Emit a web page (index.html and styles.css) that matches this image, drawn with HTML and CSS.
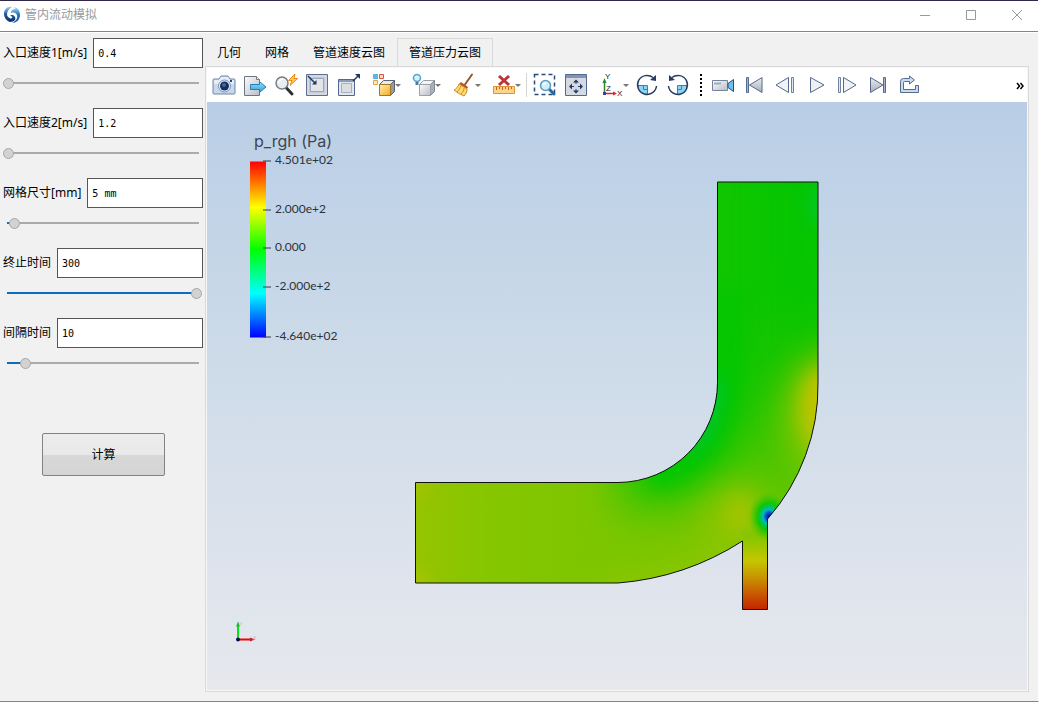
FILE: index.html
```html
<!DOCTYPE html>
<html lang="zh-CN">
<head>
<meta charset="utf-8">
<meta name="viewport" content="width=device-width, initial-scale=1">
<title>管内流动模拟</title>
<link rel="stylesheet" href="styles.css">
</head>
<body>
<svg class="shared-defs" aria-hidden="true">
  <defs>
    <linearGradient id="steel" x1="0" y1="0" x2="1" y2="1"><stop offset="0" stop-color="#fbfcfd"/><stop offset="1" stop-color="#b9bec6"/></linearGradient>
    <linearGradient id="steelDark" x1="0" y1="0" x2="0" y2="1"><stop offset="0" stop-color="#eceef1"/><stop offset="1" stop-color="#a9aeb5"/></linearGradient>
    <linearGradient id="sky" x1="0" y1="0" x2="0" y2="1"><stop offset="0" stop-color="#9fe0fa"/><stop offset="1" stop-color="#2f9bd8"/></linearGradient>
    <linearGradient id="gold" x1="0" y1="0" x2="1" y2="1"><stop offset="0" stop-color="#fff0b8"/><stop offset="1" stop-color="#f5a81c"/></linearGradient>
    <linearGradient id="logoLeft" x1="0" y1="0" x2="0" y2="1"><stop offset="0" stop-color="#9ccfe6"/><stop offset="0.500" stop-color="#1a5a9c"/><stop offset="1" stop-color="#062f66"/></linearGradient>
    <linearGradient id="logoRight" x1="0" y1="0" x2="0" y2="1"><stop offset="0" stop-color="#b5dff0"/><stop offset="0.500" stop-color="#1571bd"/><stop offset="1" stop-color="#0d57a6"/></linearGradient>
  </defs>
</svg>
<div class="window">
  <header class="titlebar">
    <svg class="logo" viewBox="0 0 18 18" aria-hidden="true">
      <path d="M9 1C4 0 1 4 1 8c0 4 3 7 6 8 2 0 4-1 5-2 1-2 0-4-2-5H7c1 1 3 2 2 3s-4 0-5-3c0-4 2-6 5-8z" fill="url(#logoLeft)"/>
      <path d="M10 1c5 0 7 4 7 8 0 5-4 8-8 8 4-2 6-5 5-8-1-2-3-3-6-2 0-3 2-4 5-4-1-1-2-1-3-2z" fill="url(#logoRight)"/>
    </svg>
    <h1 class="title">管内流动模拟</h1>
    <div class="window-buttons">
      <button class="window-button" aria-label="最小化"><svg viewBox="0 0 12 12"><path d="M1 6.500h10"/></svg></button>
      <button class="window-button" aria-label="最大化"><svg viewBox="0 0 12 12"><path d="M1.500 1.500h9v9h-9z"/></svg></button>
      <button class="window-button" aria-label="关闭"><svg viewBox="0 0 12 12"><path d="M1 1l10 10M11 1L1 11"/></svg></button>
    </div>
  </header>
  <main class="workspace">
    <form class="sidebar">
      <div class="parameter">
        <div class="field"><label for="v1">入口速度1[m/s]</label><input id="v1" class="value" type="text" value="0.4"></div>
        <input class="slider" type="range" aria-label="入口速度1" min="0" max="100" value="0" style="--fill:0%">
      </div>
      <div class="parameter">
        <div class="field"><label for="v2">入口速度2[m/s]</label><input id="v2" class="value" type="text" value="1.2"></div>
        <input class="slider" type="range" aria-label="入口速度2" min="0" max="100" value="0" style="--fill:0%">
      </div>
      <div class="parameter">
        <div class="field"><label for="mesh">网格尺寸[mm]</label><input id="mesh" class="value" type="text" value="5 mm"></div>
        <input class="slider" type="range" aria-label="网格尺寸" min="0" max="100" value="3" style="--fill:3%">
      </div>
      <div class="parameter">
        <div class="field"><label for="end">终止时间</label><input id="end" class="value" type="text" value="300"></div>
        <input class="slider" type="range" aria-label="终止时间" min="0" max="100" value="100" style="--fill:96%">
      </div>
      <div class="parameter">
        <div class="field"><label for="step">间隔时间</label><input id="step" class="value" type="text" value="10"></div>
        <input class="slider" type="range" aria-label="间隔时间" min="0" max="100" value="9" style="--fill:9%">
      </div>
      <button class="compute" type="button">计算</button>
    </form>
    <section class="content">
      <nav class="tabs" role="tablist">
        <button class="tab" role="tab" aria-selected="false">几何</button>
        <button class="tab" role="tab" aria-selected="false">网格</button>
        <button class="tab" role="tab" aria-selected="false">管道速度云图</button>
        <button class="tab tab-active" role="tab" aria-selected="true">管道压力云图</button>
      </nav>
      <div class="pane">
        <div class="toolbar" role="toolbar">
          <button class="tool" aria-label="截图"><svg viewBox="0 0 24 24"><path d="M2 6h5l2-3h7l2 3h4q1 0 1 1v13q0 1-1 1H2q-1 0-1-1V7q0-1 1-1z" fill="#c9d7ea" stroke="#6f87ab"/><path d="M2 7h5l2-3h7l2 3h4v4H2z" fill="#e6eef8"/><circle cx="12.500" cy="13" r="6" fill="#e9f1fa" stroke="#8094b3"/><circle cx="12.500" cy="13" r="4.500" fill="#15305f"/><circle cx="12" cy="12" r="2" fill="#3f68a3"/><path d="M18 7h2v2h-2z" fill="#26477d"/></svg></button>
          <button class="tool" aria-label="导出"><svg viewBox="0 0 24 24"><path d="M1.500 3.500h12l3 3v16h-15z" fill="url(#steel)" stroke="#6d7684"/><path d="M13.500 3.500v3h3" fill="#fff" stroke="#6d7684"/><path d="M7.500 11.500h9V8.500l6.500 5.500-6.500 5.500v-3h-9z" fill="url(#sky)" stroke="#237eb9"/></svg></button>
          <button class="tool" aria-label="快速缩放"><svg viewBox="0 0 24 24"><path d="M12 14.500l6 6.500" stroke="#2e3034" stroke-width="3" stroke-linecap="round"/><circle cx="8" cy="10" r="6" fill="#e8edf1" stroke="#777d84" stroke-width="1.500"/><path d="M4.500 10a4 4 0 0 1 5-3.500" fill="none" stroke="#fff" stroke-width="1.500"/><path d="M21 1l-6.500 6.500h3.500l-2 5 7.500-7h-3.500z" fill="#ffcd52" stroke="#ee8718"/></svg></button>
          <button class="tool" aria-label="适应选择"><svg viewBox="0 0 24 24"><path d="M1.500 1.500h21v21h-21z" fill="#c2c9d5" stroke="#5c6e91"/><path d="M3 3h18v18H3z" fill="none" stroke="#e4e9f0"/><path d="M5.500 5.500h13v13h-13z" fill="#e3e5e9" stroke="#9ba6b8"/><path d="M3 3l7 7" stroke="#203960" stroke-width="1.500"/><path d="M11.500 11.500V7l-4.500 4.500z" fill="#203960"/></svg></button>
          <button class="tool" aria-label="扩展选择"><svg viewBox="0 0 24 24"><path d="M2.500 6.500h16v16h-16z" fill="#e3e6eb" stroke="#53698f"/><path d="M5.500 10.500h10v9h-10z" fill="#dcdee1" stroke="#a6b0c0"/><path d="M3 8h15" stroke="#8b9cba" stroke-width="2"/><path d="M17 8l5-5" stroke="#203960" stroke-width="1.500"/><path d="M24 1h-5l5 5z" fill="#203960"/></svg></button>
          <button class="tool tool-menu" aria-label="实体着色"><svg viewBox="0 0 24 24"><path d="M2 1h5v5H2z" fill="#55b9e7"/><path d="M8.500 1.500h4v4h-4z" fill="#fbd9cf" stroke="#d9593a"/><path d="M2.500 7.500h4v4h-4z" fill="#fff0cc" stroke="#e5a33b"/><path d="M8.500 11.500l4-4h11l-4 4z" fill="#e7e8ea" stroke="#5b6270"/><path d="M19.500 11.500l4-4v11l-4 4z" fill="#959ba5" stroke="#5b6270"/><path d="M8.500 11.500h11v11h-11z" fill="url(#gold)" stroke="#a37628"/></svg></button>
          <button class="tool tool-menu" aria-label="显示"><svg viewBox="0 0 24 24"><circle cx="6" cy="5" r="3.500" fill="#d7f1fd" stroke="#4da5d4" stroke-width="1.500"/><path d="M4.500 9h3v3h-3z" fill="#557895"/><path d="M8.500 11.500l4-4h11l-4 4z" fill="#f3f4f5" stroke="#9aa0a9"/><path d="M19.500 11.500l4-4v11l-4 4z" fill="#a9afb8" stroke="#838993"/><path d="M8.500 11.500h11v11h-11z" fill="url(#steel)" stroke="#9aa0a9"/></svg></button>
          <button class="tool tool-menu" aria-label="清理"><svg viewBox="0 0 24 24"><path d="M21 1.500l-7 10" stroke="#97592a" stroke-width="2" stroke-linecap="round"/><path d="M10 9l7 5-1 2-8-5z" fill="#b9551e"/><path d="M8 11l8 5c0 3-1 5-3 7C9 21 5 19 3 17c2-1 4-3 5-6z" fill="#ffdc72" stroke="#d28a23"/><path d="M10 13c-1 2-2 4-4 6M13 15c0 2-1 4-3 6" fill="none" stroke="#d28a23"/></svg></button>
          <button class="tool tool-menu" aria-label="删除标尺"><svg viewBox="0 0 24 24"><path d="M2.500 13.500h21v7h-21z" fill="#ffd487" stroke="#dd9435"/><path d="M5.500 14v3M8.500 14v2M11.500 14v3M14.500 14v2M17.500 14v3M20.500 14v2" stroke="#b86b1d"/><path d="M8 3l10 9M18 3L8 12" stroke="#bd3338" stroke-width="3"/></svg></button>
          <span class="separator"></span>
          <button class="tool" aria-label="框选缩放"><svg viewBox="0 0 24 24"><path d="M1.500 1.500h20v20h-20z" fill="none" stroke="#2c4a78" stroke-width="1.500" stroke-dasharray="4 3"/><path d="M16 16l5 5" stroke="#25699e" stroke-width="3" stroke-linecap="round"/><circle cx="12.500" cy="12.500" r="5" fill="#d5edf9" stroke="#5b9cc5" stroke-width="1.500"/><path d="M10 12a3 3 0 0 1 3-2" fill="none" stroke="#fff" stroke-width="1.500"/></svg></button>
          <button class="tool" aria-label="全部适应"><svg viewBox="0 0 24 24"><path d="M1.500 1.500h21v21h-21z" fill="#d5dae2" stroke="#53698f"/><path d="M2 2h20v3H2z" fill="#8394b1"/><path d="M12 8v3M12 16v3M7 13.500h3M14 13.500h3" stroke="#2b456f"/><path d="M12 6.500l3 3H9zM12 20.500l3-3H9zM5 13.500l3-3v6zM19 13.500l-3-3v6z" fill="#203960"/></svg></button>
          <button class="tool tool-menu" aria-label="坐标轴"><svg viewBox="0 0 24 24"><path d="M5.500 20V8" stroke="#218b35" stroke-width="1.500"/><path d="M5.500 5l2 5h-4z" fill="#218b35"/><path d="M6 20.500h8" stroke="#ed1c24" stroke-width="1.500"/><path d="M18 20.500l-4-2v4z" fill="#ed1c24"/><path d="M4 19h3v3H4z" fill="#2647b5"/><text class="axis-name" x="6" y="6">Y</text><text class="axis-name" x="7" y="18">Z</text><text class="axis-name" x="18" y="23">X</text></svg></button>
          <button class="tool" aria-label="顺时针旋转"><svg viewBox="0 0 24 24"><path d="M3 12h9v9.500C7 21 3 17 3 12z" fill="#8dd5f6"/><path d="M2 12.500h10.500V22M8.500 12.500v4h4" fill="none" stroke="#2a86bd"/><path d="M18 4.500A9.500 9.500 0 1 0 21.500 13" fill="none" stroke="#263c61" stroke-width="1.500"/><path d="M15 7l6 1V2z" fill="#263c61"/></svg></button>
          <button class="tool" aria-label="逆时针旋转"><svg viewBox="0 0 24 24"><path d="M12 12h9c0 5-4 9-9 9.500z" fill="#8dd5f6"/><path d="M22 12.500H11.500V22M15.500 12.500v4h-4" fill="none" stroke="#2a86bd"/><path d="M6 4.500A9.500 9.500 0 1 1 2.500 13" fill="none" stroke="#263c61" stroke-width="1.500"/><path d="M9 7L3 8V2z" fill="#263c61"/></svg></button>
          <span class="grip"></span>
          <button class="tool" aria-label="录制"><svg viewBox="0 0 24 24"><path d="M1.500 7.500h15v10h-15z" fill="url(#steel)" stroke="#75839c"/><path d="M3 9.500h7v2H3z" fill="#a3abb8"/><path d="M17 10.500l5.500-4v12l-5.500-4z" fill="#6cc1e8" stroke="#1f4f80"/></svg></button>
          <button class="tool" aria-label="第一帧"><svg viewBox="0 0 24 24"><path d="M4.500 4.500h2v15h-2z" fill="#aab4c5" stroke="#53698f"/><path d="M20 4.500v15L7.500 12z" fill="url(#steelDark)" stroke="#53698f"/></svg></button>
          <button class="tool" aria-label="上一帧"><svg viewBox="0 0 24 24"><path d="M15.500 4.500v15L3 12z" fill="#f1f2f4" stroke="#53698f"/><path d="M18.500 4.500h2v15h-2z" fill="#e1e7ef" stroke="#7184a4"/></svg></button>
          <button class="tool" aria-label="播放"><svg viewBox="0 0 24 24"><path d="M6.500 4.500L20 12 6.500 19.500z" fill="#eef0f2" stroke="#53698f"/></svg></button>
          <button class="tool" aria-label="下一帧"><svg viewBox="0 0 24 24"><path d="M3.500 4.500h2v15h-2z" fill="#e1e7ef" stroke="#7184a4"/><path d="M8.500 4.500v15L21 12z" fill="#f1f2f4" stroke="#53698f"/></svg></button>
          <button class="tool" aria-label="最后一帧"><svg viewBox="0 0 24 24"><path d="M4.500 4.500v15L17 12z" fill="url(#steelDark)" stroke="#53698f"/><path d="M17.500 4.500h2v15h-2z" fill="#aab4c5" stroke="#53698f"/></svg></button>
          <button class="tool" aria-label="循环"><svg viewBox="0 0 24 24"><path d="M3.500 19.500v-11q0-3 3-3h6v-2.500l5 4-5 4V8.500h-5q-1 0-1 1v7h12v-4h3v7z" fill="#c9dced" stroke="#53698f"/></svg></button>
          <button class="more" aria-label="更多"><svg viewBox="0 0 8 8"><path d="M1 1l2.500 3L1 7M4.500 1L7 4 4.500 7"/></svg></button>
        </div>
        <div class="viewport">
          <svg class="scene" viewBox="207 102 820 587" role="img" aria-label="管道压力云图">
            <defs>
              <linearGradient id="legendScale" x1="0" y1="0" x2="0" y2="1"><stop offset="0" stop-color="#f00"/><stop offset="0.260" stop-color="#ff0"/><stop offset="0.500" stop-color="#0f0"/><stop offset="0.750" stop-color="#0ff"/><stop offset="1" stop-color="#00f"/></linearGradient>
              <linearGradient id="inletFlow" gradientUnits="userSpaceOnUse" x1="416" y1="0" x2="768" y2="0"><stop offset="0" stop-color="#96c400"/><stop offset="0.200" stop-color="#86c600"/><stop offset="0.550" stop-color="#7cc600"/><stop offset="0.800" stop-color="#78c600"/><stop offset="1" stop-color="#60c600"/></linearGradient>
              <linearGradient id="outletFlow" gradientUnits="userSpaceOnUse" x1="0" y1="182" x2="0" y2="510"><stop offset="0" stop-color="#06c600"/><stop offset="0.350" stop-color="#08c600"/><stop offset="0.550" stop-color="#1cc600"/><stop offset="0.700" stop-color="#3ac600"/><stop offset="0.850" stop-color="#4cc600" stop-opacity="0.800"/><stop offset="1" stop-color="#58c600" stop-opacity="0"/></linearGradient>
              <linearGradient id="branchFlow" gradientUnits="userSpaceOnUse" x1="0" y1="528" x2="0" y2="609"><stop offset="0" stop-color="#78c600" stop-opacity="0"/><stop offset="0.160" stop-color="#92c600"/><stop offset="0.400" stop-color="#c6c600"/><stop offset="0.620" stop-color="#c89000"/><stop offset="0.850" stop-color="#c84c00"/><stop offset="1" stop-color="#c42400"/></linearGradient>
              <radialGradient id="lowPressure"><stop offset="0" stop-color="#0010b8"/><stop offset="0.140" stop-color="#0048c8"/><stop offset="0.280" stop-color="#00b8c0"/><stop offset="0.440" stop-color="#00c640"/><stop offset="0.560" stop-color="#0cc600" stop-opacity="0.900"/><stop offset="1" stop-color="#50c600" stop-opacity="0"/></radialGradient>
              <filter id="spreadWide" filterUnits="userSpaceOnUse" x="300" y="60" width="660" height="660" color-interpolation-filters="sRGB"><feGaussianBlur stdDeviation="22"/></filter>
              <filter id="spread" filterUnits="userSpaceOnUse" x="300" y="60" width="660" height="660" color-interpolation-filters="sRGB"><feGaussianBlur stdDeviation="16"/></filter>
              <filter id="spreadSmall" filterUnits="userSpaceOnUse" x="300" y="60" width="660" height="660" color-interpolation-filters="sRGB"><feGaussianBlur stdDeviation="9"/></filter>
              <clipPath id="pipeShape"><path d="M717.500 181.500H818V382A201 201 0 0 1 767.500 518.500V609H742.500V540.500A270 270 0 0 1 618 582.500H415.500V482H618A100 100 0 0 0 717.500 382Z"/></clipPath>
            </defs>
            <g clip-path="url(#pipeShape)">
              <path d="M415 181h405v430H415z" fill="url(#inletFlow)"/>
              <path d="M670 120h200v390H670z" fill="url(#outletFlow)" filter="url(#spreadSmall)"/>
              <path d="M625 466C690 474 724 430 720 330V90" fill="none" stroke="#10c600" stroke-width="76" filter="url(#spreadWide)"/>
              <path d="M650 474C704 462 732 420 728 330V290" fill="none" stroke="#02c600" stroke-width="26" filter="url(#spreadSmall)"/>
              <path d="M690 450Q718 420 714 376" fill="none" stroke="#00c638" stroke-width="14" filter="url(#spreadSmall)"/>
              <ellipse cx="822" cy="205" rx="12" ry="18" fill="#00c830" filter="url(#spreadSmall)"/>
              <ellipse cx="824" cy="412" rx="34" ry="58" fill="#a0c600" filter="url(#spread)"/>
              <ellipse cx="822" cy="408" rx="18" ry="36" fill="#c0c400" filter="url(#spreadSmall)"/>
              <ellipse cx="736" cy="520" rx="28" ry="34" transform="rotate(20 736 520)" fill="#96c600" filter="url(#spread)"/>
              <ellipse cx="740" cy="514" rx="9" ry="18" fill="#a8c400" filter="url(#spreadSmall)"/>
              <path d="M600 590Q700 578 745 540" fill="none" stroke="#90c600" stroke-width="24" filter="url(#spread)"/>
              <ellipse cx="416" cy="482" rx="12" ry="12" fill="#acc400" filter="url(#spreadSmall)"/>
              <ellipse cx="416" cy="582" rx="12" ry="12" fill="#acc400" filter="url(#spreadSmall)"/>
              <path d="M742 528h27v82h-27z" fill="url(#branchFlow)"/>
              <ellipse cx="769" cy="516" rx="21" ry="25" fill="url(#lowPressure)"/>
            </g>
            <path class="pipe-edge" d="M717.500 181.500H818V382A201 201 0 0 1 767.500 518.500V609H742.500V540.500A270 270 0 0 1 618 582.500H415.500V482H618A100 100 0 0 0 717.500 382Z"/>
            <path d="M250 161h16v176h-16z" fill="url(#legendScale)"/>
            <path class="tick" d="M263 160.500h8M263 209.500h8M263 247.500h8M263 286.500h8M263 336.500h8"/>
            <text class="legend-title" x="254" y="146">p_rgh (Pa)</text>
            <g class="legend-value">
              <text x="275" y="163">4.501e+02</text>
              <text x="275" y="212">2.000e+2</text>
              <text x="275" y="250">0.000</text>
              <text x="275" y="289">-2.000e+2</text>
              <text x="275" y="339">-4.640e+02</text>
            </g>
            <path d="M238 639v-14" stroke="#00e41a" stroke-width="2"/><path d="M238 621l2 5h-4z" fill="#22b536"/>
            <path d="M238 639h14" stroke="#f40000" stroke-width="2"/><path d="M255 639l-5-2v4z" fill="#c22a2a"/>
            <circle cx="238" cy="639" r="2" fill="#0a0a50"/>
            <text class="triad-name" x="239" y="625" fill="#7be08a">Y</text><text class="triad-name" x="253" y="639" fill="#f09a9a">X</text>
          </svg>
        </div>
      </div>
    </section>
  </main>
</div>
</body>
</html>
```
FILE: styles.css
```css
* {
  box-sizing: border-box;
}

body {
  margin: 0;
  font-family: "Noto Sans", "Noto Sans CJK SC", sans-serif;
  font-size: 12px;
  color: #000;
}

button,
input {
  font: inherit;
  color: inherit;
}

button {
  padding: 0;
  border: 0;
  background: none;
}

.shared-defs {
  position: absolute;
  width: 0;
  height: 0;
}

.window {
  display: flex;
  flex-direction: column;
  min-height: 100vh;
  background: #f1f1f1;
  border-right: 1px solid #fff;
  border-bottom: 1px solid #85838f;
}

.titlebar {
  display: flex;
  align-items: center;
  height: 32px;
  padding: 0 0 2px 3px;
  background: #fff;
  border-top: 1px solid #34284a;
  border-bottom: 1px solid #82829a;
}

.logo {
  width: 18px;
  height: 18px;
}

.title {
  margin: 0;
  padding-left: 4px;
  font-size: 12px;
  font-weight: 400;
  line-height: 20px;
  color: #999;
}

.window-buttons {
  display: flex;
  margin: 0 -2px 0 auto;
}

.window-button {
  display: grid;
  place-items: center;
  width: 46px;
  height: 28px;
}

.window-button svg {
  width: 12px;
  height: 12px;
  fill: none;
  stroke: #999;
}

.workspace {
  display: flex;
  flex: 1;
  padding: 5px 9px 9px 0;
  border-top: 1px solid #fff;
}

.sidebar {
  display: flex;
  flex-direction: column;
  flex: 0 0 205px;
  padding: 0 2px 0 3px;
}

.parameter {
  height: 70px;
}

.field {
  display: flex;
  align-items: center;
  gap: 6px;
  height: 30px;
}

.field label {
  padding-bottom: 2px;
}

.value {
  flex: 1;
  min-width: 0;
  height: 30px;
  padding: 0 4px;
  border: 1px solid #555559;
  background: #fff;
  font-family: "DejaVu Sans Mono", monospace;
  font-size: 10px;
}

.slider {
  display: block;
  width: calc(100% - 1px);
  height: 11px;
  margin: 10px 0 0;
  appearance: none;
  background: linear-gradient(#0f6cbd, #0f6cbd) 4px 4px / var(--fill) 2px no-repeat,
    linear-gradient(#ababab, #ababab) 4px 4px / calc(100% - 7px) 2px no-repeat;
}

.slider::-webkit-slider-thumb {
  appearance: none;
  width: 11px;
  height: 11px;
  border: 1px solid #a8a8a8;
  border-radius: 50%;
  background: #d2d2d2;
}

.compute {
  width: 123px;
  height: 43px;
  margin: 45px auto 0 39px;
  padding-bottom: 2px;
  border: 1px solid #828282;
  border-radius: 2px;
  background: linear-gradient(#ececec, #e9e9e9 50%, #d8d8d8 50%, #d4d4d4);
}

.content {
  display: flex;
  flex: 1;
  flex-direction: column;
  min-width: 0;
}

.tabs {
  display: flex;
  height: 28px;
}

.tab {
  padding: 0 12px;
  line-height: 30px;
}

.tab-active {
  padding: 0 11px;
  border: 1px solid #d9d9d9;
  border-bottom: 0;
  line-height: 28px;
}

.pane {
  display: flex;
  flex: 1;
  flex-direction: column;
  padding: 1px;
  border: 1px solid #d9d9d9;
  background: #f7f7f7;
}

.toolbar {
  display: flex;
  align-items: center;
  height: 34px;
  padding: 0 3px 0 1px;
  background: #fff;
  overflow: hidden;
}

.tool {
  display: flex;
  flex: none;
  align-items: center;
  justify-content: center;
  width: 31px;
  height: 30px;
}

.tool svg {
  flex: none;
  width: 24px;
  height: 24px;
}

.tool-menu {
  justify-content: flex-end;
  width: 40px;
  padding-right: 2px;
}

.tool-menu::after {
  content: "";
  border: 3px solid transparent;
  border-top: 3px solid #777;
  border-bottom: 0;
}

.axis-name {
  font-family: "Liberation Sans", sans-serif;
  font-size: 8px;
  fill: #222;
}

.separator {
  width: 1px;
  height: 24px;
  margin: 0 2px 0 3px;
  background: #d5d5d5;
}

.grip {
  flex: none;
  width: 2px;
  height: 22px;
  margin: 0 5px 0 7px;
  background: repeating-linear-gradient(#000 0 2px, #fff 2px 4px);
}

.more {
  width: 8px;
  height: 30px;
  margin-left: auto;
}

.more svg {
  width: 8px;
  height: 8px;
  fill: none;
  stroke: #000;
  stroke-width: 1.5;
}

.viewport {
  display: flex;
  flex: 1;
  min-height: 0;
  background: linear-gradient(#b9cee6, #cfdce9 48%, #dfe4ed 82%, #e6e8ec);
}

.scene {
  flex: 1;
  width: 100%;
  min-width: 0;
}

.pipe-edge {
  fill: none;
  stroke: #111;
}

.tick {
  stroke: #333b44;
}

.legend-title {
  font-family: Inter, sans-serif;
  font-size: 16px;
  fill: #3e4650;
}

.legend-value {
  font-family: Lato, sans-serif;
  font-size: 12px;
  fill: #2b323a;
}

.triad-name {
  font-family: "Liberation Sans", sans-serif;
  font-size: 5px;
}
```
